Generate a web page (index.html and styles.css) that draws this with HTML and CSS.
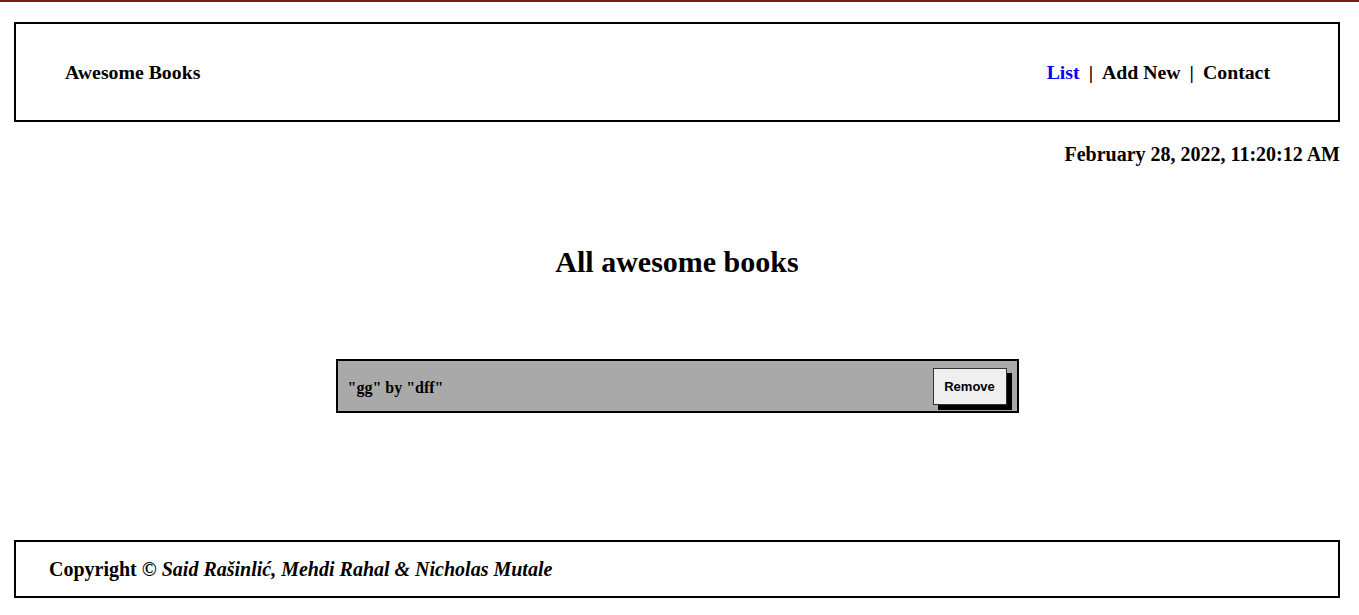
FILE: index.html
```html
<!DOCTYPE html>
<html lang="en">
<head>
<meta charset="utf-8">
<title>Awesome Books</title>
<link rel="stylesheet" href="styles.css">
</head>
<body>
<div class="topline"></div>
<div class="page">
  <header class="header">
    <h1 class="brand">Awesome Books</h1>
    <nav class="nav">
      <a class="nav-link active" href="#">List</a>
      <span class="sep">|</span>
      <a class="nav-link" href="#">Add New</a>
      <span class="sep">|</span>
      <a class="nav-link" href="#">Contact</a>
    </nav>
  </header>
  <p class="date">February 28, 2022, 11:20:12 AM</p>
  <main class="main">
    <h2 class="title">All awesome books</h2>
    <ul class="books">
      <li class="book">
        <span class="book-text">"gg" by "dff"</span>
        <button class="remove" type="button">Remove</button>
      </li>
    </ul>
  </main>
  <footer class="footer">
    <p class="copy">Copyright © <em>Said Rašinlić, Mehdi Rahal &amp; Nicholas Mutale</em></p>
  </footer>
</div>
</body>
</html>
```
FILE: styles.css
```css
* { box-sizing: border-box; }
html, body { margin: 0; padding: 0; background: #fff; }
body {
  font-family: "Liberation Serif", "Times New Roman", serif;
  color: #000;
}
.topline {
  height: 2px;
  background: #7a1c1c;
}
.page {
  padding: 20px 19px 0 14px;
  display: flex;
  flex-direction: column;
}
.header {
  height: 100px;
  border: 2px solid #000;
  display: flex;
  align-items: center;
  justify-content: space-between;
  padding: 1px 68px 0 49px;
}
.brand {
  margin: 0;
  font-size: 19.8px;
  font-weight: bold;
}
.nav {
  display: flex;
  align-items: center;
  gap: 9px;
  font-size: 19.8px;
  font-weight: bold;
}
.nav-link {
  color: #000;
  text-decoration: none;
}
.nav-link.active { color: #0000ff; }
.date {
  margin: 20px 0 0;
  text-align: right;
  font-size: 20px;
  font-weight: bold;
  line-height: 24px;
}
.main {
  display: flex;
  flex-direction: column;
  align-items: center;
}
.title {
  margin: 78px 0 0;
  font-size: 30px;
  line-height: 36px;
  font-weight: bold;
}
.books {
  list-style: none;
  margin: 79px 0 0;
  padding: 0;
  width: 683px;
}
.book {
  height: 54px;
  border: 2px solid #000;
  background: #a9a9a9;
  display: flex;
  align-items: flex-start;
  justify-content: space-between;
  padding: 7px 10px 0;
}
.book-text {
  font-size: 16px;
  font-weight: bold;
  align-self: center;
  margin-top: -4px;
}
.remove {
  width: 74px;
  height: 37px;
  padding: 0;
  background: #efefef;
  border: 1px solid #333;
  box-shadow: 5px 5px 0 #000;
  font-family: "Liberation Sans", Arial, sans-serif;
  font-size: 13px;
  font-weight: bold;
  color: #000;
}
.footer {
  margin-top: 127px;
  height: 58px;
  border: 2px solid #000;
  display: flex;
  align-items: center;
  padding: 1px 33px 0;
}
.copy {
  margin: 0;
  font-size: 20px;
  font-weight: bold;
}
.copy em { font-style: italic; }
```
